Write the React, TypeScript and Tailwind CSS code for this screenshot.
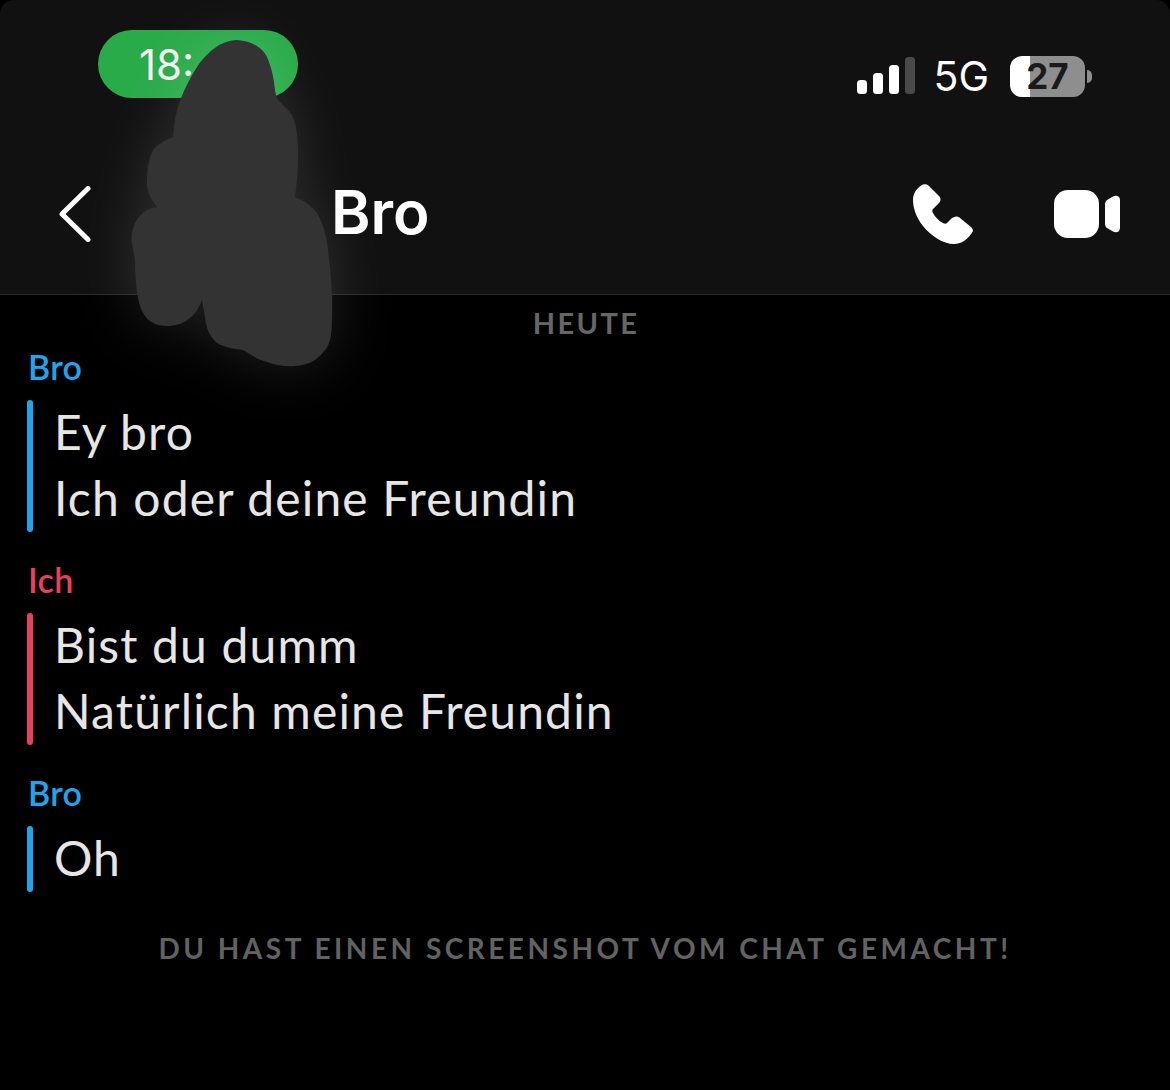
const bodyFont = "font-['Lato','Noto_Sans',sans-serif]";

const messages = [
  { sender: "Bro", nameClass: "text-[#1fa5ee]", barClass: "bg-[#1fa5ee]", lines: ["Ey bro", "Ich oder deine Freundin"] },
  { sender: "Ich", nameClass: "text-[#e9405f]", barClass: "bg-[#e9405f]", lines: ["Bist du dumm", "Natürlich meine Freundin"] },
  { sender: "Bro", nameClass: "text-[#1fa5ee]", barClass: "bg-[#1fa5ee]", lines: ["Oh"] },
];

const SignalIcon = () => (
  <svg width="58" height="38" viewBox="0 0 58 38" className="block">
    <rect x="0" y="23" width="10" height="14" rx="3.5" fill="#fff" />
    <rect x="16" y="16" width="10" height="21" rx="3.5" fill="#fff" />
    <rect x="32" y="8" width="10" height="29" rx="3.5" fill="#fff" />
    <rect x="48" y="0" width="10" height="37" rx="3.5" fill="#4a4a4a" />
  </svg>
);

const PhoneIcon = () => (
  <svg width="60" height="60" viewBox="0 0 60 60" className="block">
    <path
      fill="#fff"
      d="M8 1.5C11-.5 14 0 16 2L26 12C28 14 28 17 26 19L20 25C19 26 19 27 20 29C22 33 26 37 30 39C32 40 33 40 34 39L39 34C42 32 45 32 47 34L58 43C60.5 45 60.5 48 58 50C54 56 48 60 41 60C30 60 18 52 10 42C3 33 0 24 0 16C0 10 3 5 8 1.5Z"
    />
  </svg>
);

const VideoIcon = () => (
  <svg width="66" height="48" viewBox="0 0 66 48" className="block">
    <rect x="0" y="0" width="45" height="48" rx="14" fill="#fff" />
    <path
      fill="#fff"
      d="M51 14C51 12.5 52 11 53 10L59 6.5C62 5 66 6 66 10V38C66 42 62 43 59 41.5L53 38C52 37 51 35.5 51 34Z"
    />
  </svg>
);

const BackIcon = () => (
  <svg width="32" height="56" viewBox="0 0 32 56" className="block">
    <path d="M29 2.5L3 28L29 53.5" fill="none" stroke="#fff" strokeWidth="5" strokeLinecap="round" strokeLinejoin="round" />
  </svg>
);

// hand-drawn blob that hides the name and the clock, drawn in page coordinates
const Scribble = () => (
  <svg
    width="400"
    height="420"
    viewBox="0 0 400 420"
    className="absolute left-0 top-0 drop-shadow-[0_0_30px_rgba(255,255,255,0.13)]"
  >
    <path
      fill="#333333"
      d="M237 40C252 41 263 48 267 57C272 68 274 80 275 90C276 98 278 100 284 106C292 113 296 120 297 135C299 150 298 175 295 197C305 201 312 206 317 213C324 225 327 238 328 250C331 275 333 295 332 317C332 335 330 345 325 350C318 360 308 365 295 366C285 367 275 365 267 362C258 360 250 354 243 350C234 349 224 347 217 343C209 336 206 327 205 317L202 300C198 310 194 315 190 318C183 324 175 326 167 326C155 326 148 321 143 313C137 302 136 285 135 267C136 255 130 245 132 233C134 222 138 217 143 213C147 209 152 208 157 207C150 198 146 190 147 180C147 168 149 158 153 150C158 144 165 140 173 137C174 128 175 118 177 110C182 93 190 78 197 67C206 54 220 40 237 40Z"
    />
  </svg>
);

const Header = () => (
  <header className="flex h-[295px] flex-col rounded-t-[14px] border-b border-[#2a2a2a] bg-[#111111]">
    <div className="flex items-start justify-between pl-[98px] pr-[78px] pt-[30px]">
      <div className="flex h-[68px] w-[200px] items-center rounded-full bg-[#2aab4a] pl-[41px] font-['Inter',sans-serif] text-[42px] font-normal text-[#f2f2f2]">
        18:
      </div>
      <div className="flex h-[92px] items-center">
        <SignalIcon />
        <span className="ml-[18px] font-['Inter',sans-serif] text-[41px] leading-none text-white">5G</span>
        <div className="ml-[21px] flex h-[41px] w-[75px] items-center justify-center rounded-[12px] bg-[linear-gradient(90deg,#fff_27%,#8e8e8e_27%)] font-['Inter',sans-serif] text-[35px] font-bold leading-none text-[#1a1a1a]">
          27
        </div>
        <div className="ml-[2px] h-[13px] w-[5px] rounded-r-full bg-[#8e8e8e]" />
      </div>
    </div>
    <div className="mt-[62px] flex items-center justify-between pl-[59px] pr-[50px]">
      <div className="flex items-center">
        <BackIcon />
        <span className="ml-[240px] -translate-y-[2px] font-['Inter',sans-serif] text-[60px] font-semibold leading-none text-white">
          Bro
        </span>
      </div>
      <div className="flex items-center gap-[81px]">
        <PhoneIcon />
        <VideoIcon />
      </div>
    </div>
  </header>
);

export default function App() {
  return (
    <div className={`relative h-[1090px] w-[1170px] overflow-hidden bg-black ${bodyFont}`}>
      <Header />
      <Scribble />
      <main className="flex flex-col pt-[10px]">
        <div className="pl-[2px] text-center text-[29px] font-bold leading-[36px] tracking-[2.4px] text-[#666666]">HEUTE</div>
        <div className="mt-[7px] flex flex-col gap-[29px]">
          {messages.map((message, i) => (
            <section key={i} className="flex flex-col pl-[27px]">
              <div className={`-mt-[1px] pl-[1px] text-[34px] font-semibold leading-[40px] tracking-[0.3px] ${message.nameClass}`}>
                {message.sender}
              </div>
              <div className="mt-[13px] flex">
                <div className={`w-[6px] rounded-full ${message.barClass}`} />
                <div className="-translate-y-[1px] pl-[21px] text-[48px] font-normal leading-[66px] tracking-[1.15px] text-[#e6e6e6]">
                  {message.lines.map((line) => (
                    <div key={line}>{line}</div>
                  ))}
                </div>
              </div>
            </section>
          ))}
        </div>
        <div className="mt-[38px] text-center text-[28px] font-bold leading-[36px] tracking-[3.5px] text-[#626262]">
          DU HAST EINEN SCREENSHOT VOM CHAT GEMACHT!
        </div>
      </main>
    </div>
  );
}
